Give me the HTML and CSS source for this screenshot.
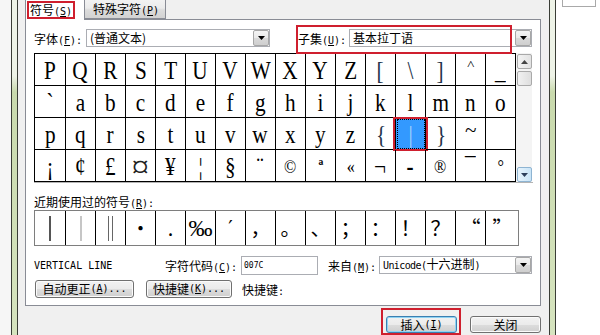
FILE: index.html
```html
<!DOCTYPE html>
<html>
<head>
<meta charset="utf-8">
<link rel="stylesheet" href="styles.css">
</head>
<body>
<div class="screen">
  <div class="bg-left"></div>
  <div class="frame"></div>
  <div class="dialog">
    <div class="tabs">
      <div class="tab active"><span class="mark-tab">符号<span class="a">(<u>S</u>)</span></span></div>
      <div class="tab inactive">特殊字符<span class="a">(<u>P</u>)</span></div>
    </div>
    <div class="panel">
      <div class="font-row">
        <span class="lbl-font">字体<span class="a">(<u>F</u>):</span></span>
        <div class="select sel-font"><span class="val">(普通文本)</span><span class="dd"><svg width="7" height="4" viewBox="0 0 7 4"><path d="M0 0H7L3.5 4Z" fill="#000"/></svg></span></div>
        <div class="subset">
          <span class="lbl-subset">子集<span class="a">(<u>U</u>):</span></span>
          <div class="select sel-subset"><span class="val">基本拉丁语</span><span class="dd"><svg width="7" height="4" viewBox="0 0 7 4"><path d="M0 0H7L3.5 4Z" fill="#000"/></svg></span></div>
        </div>
      </div>
      <div class="charmap">
        <div class="grid">
          <div class="c"><span>P</span></div><div class="c"><span>Q</span></div><div class="c"><span>R</span></div><div class="c"><span>S</span></div><div class="c"><span>T</span></div><div class="c"><span>U</span></div><div class="c"><span>V</span></div><div class="c"><span>W</span></div><div class="c"><span>X</span></div><div class="c"><span>Y</span></div><div class="c"><span>Z</span></div><div class="c br"><span>[</span></div><div class="c br"><span>\</span></div><div class="c br"><span>]</span></div><div class="c"><span class="hat">^</span></div><div class="c"><span>_</span></div>
          <div class="c"><span>`</span></div><div class="c"><span>a</span></div><div class="c"><span>b</span></div><div class="c"><span>c</span></div><div class="c"><span>d</span></div><div class="c"><span>e</span></div><div class="c"><span>f</span></div><div class="c"><span>g</span></div><div class="c"><span>h</span></div><div class="c"><span>i</span></div><div class="c"><span>j</span></div><div class="c"><span>k</span></div><div class="c"><span>l</span></div><div class="c"><span>m</span></div><div class="c"><span>n</span></div><div class="c"><span>o</span></div>
          <div class="c"><span>p</span></div><div class="c"><span>q</span></div><div class="c"><span>r</span></div><div class="c"><span>s</span></div><div class="c"><span>t</span></div><div class="c"><span>u</span></div><div class="c"><span>v</span></div><div class="c"><span>w</span></div><div class="c"><span>x</span></div><div class="c"><span>y</span></div><div class="c"><span>z</span></div><div class="c br"><span>{</span></div><div class="c sel"><span>|</span></div><div class="c br"><span>}</span></div><div class="c"><span class="tilde">~</span></div><div class="c"><span></span></div>
          <div class="c"><span>¡</span></div><div class="c"><span>¢</span></div><div class="c"><span>£</span></div><div class="c"><span class="big">¤</span></div><div class="c"><span>¥</span></div><div class="c"><span>¦</span></div><div class="c"><span>§</span></div><div class="c"><span>¨</span></div><div class="c sm"><span>©</span></div><div class="c sm"><span class="b">ª</span></div><div class="c sm"><span>«</span></div><div class="c"><span>¬</span></div><div class="c"><span class="b">-</span></div><div class="c sm"><span>®</span></div><div class="c"><span>¯</span></div><div class="c sm"><span>°</span></div>
        </div>
        <div class="scrollbar">
          <div class="sb-btn"><svg width="7" height="4" viewBox="0 0 7 4"><path d="M0 4H7L3.5 0Z" fill="#444"/></svg></div>
          <div class="sb-thumb"></div>
          <div class="sb-track"></div>
          <div class="sb-btn hot"><svg width="7" height="4" viewBox="0 0 7 4"><path d="M0 0H7L3.5 4Z" fill="#2c3e5a"/></svg></div>
        </div>
      </div>
      <div class="recent-label">近期使用过的符号<span class="a">(<u>R</u>):</span></div>
      <div class="recent">
        <div class="rc"><span class="bar dark"></span></div>
        <div class="rc"><span class="bar light"></span></div>
        <div class="rc"><span class="bar dbl"></span></div>
        <div class="rc">•</div>
        <div class="rc">.</div>
        <div class="rc pm">‰</div>
        <div class="rc prime">′</div>
        <div class="rc">，</div>
        <div class="rc">。</div>
        <div class="rc">、</div>
        <div class="rc">；</div>
        <div class="rc">：</div>
        <div class="rc">！</div>
        <div class="rc">？</div>
        <div class="rc">“</div>
        <div class="rc">”</div>
      </div>
      <div class="info-row">
        <span class="char-name">VERTICAL LINE</span>
        <span class="lbl-code">字符代码<span class="a">(<u>C</u>):</span></span>
        <div class="input code"><span>007C</span></div>
        <span class="lbl-from">来自<span class="a">(<u>M</u>):</span></span>
        <div class="select sel-from"><span class="val"><span class="a uni">Unicode(</span>十六进制<span class="a">)</span></span><span class="dd"><svg width="7" height="4" viewBox="0 0 7 4"><path d="M0 0H7L3.5 4Z" fill="#000"/></svg></span></div>
      </div>
      <div class="btn-row">
        <div class="btn b-auto">自动更正<span class="a">(<u>A</u>)...</span></div>
        <div class="btn b-short">快捷键<span class="a">(<u>K</u>)...</span></div>
        <span class="lbl-short">快捷键<span class="a">:</span></span>
      </div>
    </div>
    <div class="bottom-row">
      <div class="btn b-insert">插入<span class="a">(<u>I</u>)</span></div>
      <div class="btn b-close">关闭</div>
    </div>
  </div>
  <div class="frame"></div>
  <div class="bg-right"><div class="mini-box"></div></div>
</div>
</body>
</html>
```

FILE: styles.css
```css
* { box-sizing: border-box; margin: 0; padding: 0; }
html, body { width: 600px; height: 335px; overflow: hidden; background: #fff; }
body { font-family: "Noto Sans CJK SC", "Noto Sans", sans-serif; font-size: 12px; color: #000; }

.a { font-family: "DejaVu Sans Mono", "Liberation Mono", monospace; font-size: 10px; }
.a u { text-underline-offset: 1px; }

.screen { display: flex; height: 335px; }
.bg-left { width: 11px; background: #f6f6f6; }
.frame {
  width: 7px;
  border-left: 1px solid #3a3d36;
  border-right: 1px solid #3a3d36;
  background: linear-gradient(#eef3e7 0, #eef3e7 76px, #c9daad 92px, #d6e4bf 100%);
}
.bg-right { flex: 1; background: #fff; padding-left: 6px; }
.mini-box { width: 34px; height: 7px; border: 1px solid #a9a9a9; border-top: 0; }

.dialog {
  width: 531px;
  background: #f0f0f0;
  padding: 0 8px 0 7px;
  display: flex;
  flex-direction: column;
}

/* tabs */
.tabs { display: flex; height: 20px; align-items: flex-start; position: relative; z-index: 1; }
.tab { height: 19px; border: 1px solid #898c95; border-top: 0; line-height: 17px; white-space: nowrap; }
.tab.active { width: 60px; height: 20px; background: #fff; border-bottom: 0; padding: 1px 0 0 1px; }
.tab.inactive {
  width: 81px; border-left: 0;
  background: linear-gradient(#f2f2f2 0%, #ebebeb 45%, #dcdcdc 55%, #d2d2d2 100%);
  padding-left: 8px; line-height: 18px;
}
.mark-tab { display: inline-block; height: 18px; border: 2px solid #cf1f2e; padding: 0 1px 0 1px; line-height: 14px; }

/* panel */
.panel {
  height: 287px;
  margin-top: -1px;
  background: #fff;
  border: 1px solid #898c95;
  padding: 6px 7px 0 8px;
}
.font-row { display: flex; align-items: center; height: 24px; }
.lbl-font { width: 52px; white-space: nowrap; }
.select {
  height: 18px;
  border: 1px solid #abadb3;
  background: #fff;
  display: flex;
  align-items: center;
  justify-content: space-between;
  padding-left: 3px;
}
.val { line-height: 14px; white-space: nowrap; }
.dd {
  width: 16px; height: 16px;
  border: 1px solid #a7a7a7;
  border-radius: 2px;
  background: linear-gradient(#f4f4f4 0%, #e9e9e9 50%, #d9d9d9 51%, #cfcfcf 100%);
  display: flex; align-items: center; justify-content: center;
}
.sel-font { width: 184px; }
.subset { display: flex; align-items: center; margin-left: 26px; height: 24px; position: relative; }
.subset::after {
  content: ""; position: absolute; left: 0; top: -1px; width: 212px; height: 25px;
  border: 2px solid #cf1f2e; pointer-events: none;
}
.lbl-subset { width: 53px; padding-left: 2px; white-space: nowrap; }
.sel-subset { width: 183px; }

/* char grid */
.charmap { display: flex; margin-top: 3px; border-bottom: 1px solid #b4b4b4; }
.grid {
  display: grid;
  grid-template-columns: 31px repeat(15, 30px);
  grid-auto-rows: 32px;
  border-left: 1px solid #000;
  border-top: 1px solid #000;
  font-family: "Liberation Serif", "DejaVu Serif", serif;
  font-size: 25px;
  line-height: 34px;
}
.c { border-right: 1px solid #000; border-bottom: 1px solid #000; text-align: center; position: relative; }
.c span { display: inline-block; transform: scaleX(.85); }
.c span.big { transform: scale(1.4, 1.3); font-weight: normal; color: #222; }
.c span.hat { transform: translateY(-6px) scale(.6, .5); }
.c span.tilde { transform: translateY(-4px) scale(.85, .8); }
.c.sm { font-size: 19px; }
.c.br { color: #22324a; }
.c .b { font-weight: bold; }
.c.sel { background: #3399ff; color: #a9d2fb; outline: 1px dotted #000; outline-offset: -2px; }
.c.sel::after {
  content: ""; position: absolute; left: -3px; top: -1px; right: -3px; bottom: -2px;
  border: 2px solid #cf1f2e;
}
.scrollbar { width: 16px; display: flex; flex-direction: column; background: #f4f4f4; padding: 1px 0 0 1px; }
.sb-btn {
  width: 15px; height: 15px;
  border: 1px solid #a9a9a9; border-radius: 2px;
  background: linear-gradient(90deg, #f3f3f3, #e2e2e2);
  display: flex; align-items: center; justify-content: center;
}
.sb-btn.hot { background: linear-gradient(90deg, #e6f3fc, #c9e4f7); border-color: #8eb4d2; }
.sb-thumb { width: 15px; height: 15px; margin-top: 2px; border: 1px solid #a9a9a9; border-radius: 2px; background: linear-gradient(90deg, #f1f1f1, #dedede); }
.sb-track { flex: 1; }

/* recent */
.recent-label { margin-top: 10px; height: 17px; line-height: 17px; }
.recent {
  margin-top: 0;
  display: grid;
  grid-template-columns: 31px repeat(14, 30px) 33px;
  height: 36px;
  border: 1px solid #7e7e7e;
  width: 485px;
}
.rc { border-right: 1px solid #000; display: flex; align-items: center; justify-content: center; font-family: "Noto Sans CJK SC", sans-serif; font-size: 20px; line-height: 34px; }
.rc:last-child { border-right: 0; }
.bar { display: block; width: 2px; height: 25px; background: #555; }
.bar.light { background: #c6c6c6; }
.bar.dbl { width: 5px; background: none; border-left: 1px solid #666; border-right: 1px solid #666; }
.rc.pm { font-family: "Liberation Serif", serif; font-size: 24px; }
.rc.prime { font-family: "DejaVu Serif", serif; font-size: 20px; align-items: flex-start; }

/* info */
.info-row { display: flex; align-items: center; height: 20px; margin-top: 9px; }
.char-name { width: 131px; font-family: "DejaVu Sans Mono", monospace; font-size: 10px; }
.lbl-code { width: 76px; white-space: nowrap; }
.input { width: 77px; height: 19px; border: 1px solid #abadb3; background: #fff; padding-left: 2px; display: flex; align-items: center; }
.code span { font-family: "DejaVu Sans Mono", monospace; font-size: 8px; }
.lbl-from { margin-left: 10px; width: 51px; white-space: nowrap; }
.sel-from { width: 153px; }
.uni { letter-spacing: -0.6px; }

.btn-row { display: flex; align-items: center; margin-top: 5px; height: 18px; }
.btn {
  height: 18px;
  border: 1px solid #707070;
  border-radius: 3px;
  background: linear-gradient(#f2f2f2 0%, #ebebeb 50%, #dddddd 51%, #cfcfcf 100%);
  box-shadow: inset 0 0 0 1px #fbfbfb;
  display: flex; align-items: center; justify-content: center;
  line-height: 14px;
  white-space: nowrap;
}
.b-auto { width: 99px; margin-left: 1px; }
.b-short { width: 86px; margin-left: 12px; }
.lbl-short { margin-left: 10px; }

.bottom-row { display: flex; justify-content: flex-end; gap: 13px; margin-top: 10px; }
.b-insert { width: 71px; height: 17px; border-color: #3c7fb1; box-shadow: inset 0 0 0 1px #8fd3f2; position: relative; }
.b-insert::after {
  content: ""; position: absolute; left: -6px; right: -5px; top: -9px; bottom: -3px;
  border: 2px solid #cf1f2e;
}
.b-close { width: 71px; height: 17px; }
```
